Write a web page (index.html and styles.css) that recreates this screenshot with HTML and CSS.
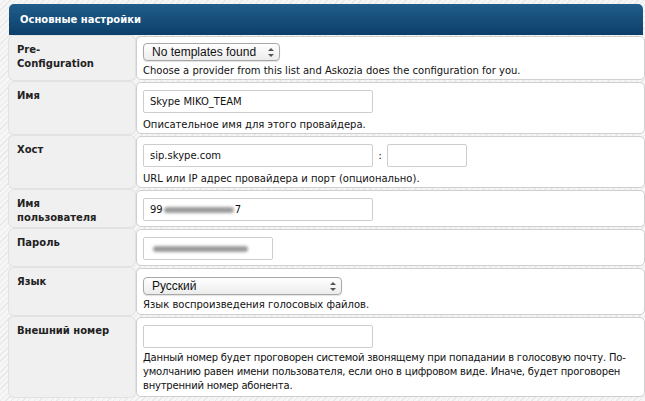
FILE: index.html
```html
<!DOCTYPE html>
<html lang="ru">
<head>
<meta charset="utf-8">
<link rel="stylesheet" href="styles.css">
</head>
<body>
<div class="page">
  <div class="panel-head">Основные настройки</div>
  <div class="form">
    <div class="label">Pre-<br>Configuration</div>
    <div class="value">
      <div class="select sel-tpl"><span>No templates found</span><span class="arrows"></span></div>
      <div class="desc">Choose a provider from this list and Askozia does the configuration for you.</div>
    </div>

    <div class="label">Имя</div>
    <div class="value">
      <div class="input w-wide">Skype MIKO_TEAM</div>
      <div class="desc after-input">Описательное имя для этого провайдера.</div>
    </div>

    <div class="label">Хост</div>
    <div class="value">
      <div class="host-row">
        <div class="input w-wide">sip.skype.com</div>
        <span class="colon">:</span>
        <div class="input w-port"></div>
      </div>
      <div class="desc after-input">URL или IP адрес провайдера и порт (опционально).</div>
    </div>

    <div class="label">Имя<br>пользователя</div>
    <div class="value val-tight">
      <div class="input w-wide"><span>99</span><span class="blur b1"></span><span>7</span></div>
    </div>

    <div class="label">Пароль</div>
    <div class="value val-tight">
      <div class="input w-pass"><span class="blur b2"></span></div>
    </div>

    <div class="label">Язык</div>
    <div class="value val-lang">
      <div class="select sel-lang"><span>Русский</span><span class="arrows"></span></div>
      <div class="desc">Язык воспроизведения голосовых файлов.</div>
    </div>

    <div class="label">Внешний номер</div>
    <div class="value val-last">
      <div class="input w-wide"></div>
      <div class="desc desc-long">Данный номер будет проговорен системой звонящему при попадании в голосовую почту. По-умолчанию равен имени пользователя, если оно в цифровом виде. Иначе, будет проговорен внутренний номер абонента.</div>
    </div>
  </div>
</div>
</body>
</html>
```

FILE: styles.css
```css
html, body {
  margin: 0;
  padding: 0;
}
body {
  background-color: #f3f3f3;
  background-image: repeating-linear-gradient(135deg, #f6f6f6 0 3px, #e8e8e8 3px 4px);
  font-family: "DejaVu Sans", Verdana, sans-serif;
  color: #111;
  width: 645px;
  height: 401px;
  overflow: hidden;
}
.page {
  padding: 4px 2px 0 9px;
}
.panel-head {
  height: 31px;
  box-sizing: border-box;
  padding: 10px 0 0 11px;
  background: linear-gradient(#215d8b, #0c3f6a);
  border-radius: 5px 5px 0 0;
  color: #fff;
  font-weight: bold;
  font-size: 10px;
  line-height: 12px;
}
.form {
  display: grid;
  grid-template-columns: 126px 1fr;
  column-gap: 1px;
  row-gap: 2px;
  margin-top: 1px;
}
.label {
  background: #f0f0f0;
  border-radius: 5px;
  box-shadow: 0 0 0 1px #e2e2e2;
  padding: 7px 8px 2px;
  font-weight: bold;
  font-size: 10px;
  line-height: 14px;
  color: #222;
}
.value {
  background: #fff;
  border: 1px solid #cfcfcf;
  border-radius: 5px;
  padding: 6px 6px 1px;
  font-family: "DejaVu Sans", sans-serif;
  font-size: 10px;
}
.val-tight { padding-bottom: 5px; }
.val-lang { padding-bottom: 2px; }
.val-last { padding-bottom: 3px; }
.desc {
  margin-top: 3px;
  line-height: 14px;
  color: #111;
}
.after-input { margin-top: 5px; }
.desc-long {
  width: 495px;
  letter-spacing: -0.2px;
}
.input {
  box-sizing: border-box;
  height: 23px;
  margin-top: 1px;
  border: 1px solid #cdcdcd;
  border-radius: 2px;
  background: #fff;
  padding: 0 6px;
  line-height: 21px;
  font-size: 10px;
  display: flex;
  align-items: center;
}
.w-wide { width: 230px; }
.w-port { width: 80px; }
.w-pass { width: 130px; }
.host-row {
  display: flex;
  align-items: center;
}
.colon {
  width: 14px;
  text-align: center;
  font-size: 11px;
}
.select {
  box-sizing: border-box;
  height: 18px;
  border: 1px solid #a8a8a8;
  border-radius: 4px;
  background: linear-gradient(#ffffff, #ececec);
  display: flex;
  align-items: center;
  justify-content: space-between;
  padding: 0 5px 0 8px;
  font-family: "Liberation Sans", Arial, sans-serif;
  font-size: 12px;
  box-shadow: 0 1px 1px rgba(0,0,0,0.12);
}
.sel-tpl { width: 137px; }
.sel-lang { width: 199px; margin-top: 2px; }
.arrows {
  width: 6px;
  height: 9px;
  position: relative;
}
.arrows::before, .arrows::after {
  content: "";
  position: absolute;
  left: 0;
  border-left: 3px solid transparent;
  border-right: 3px solid transparent;
}
.arrows::before { top: 0; border-bottom: 3px solid #555; }
.arrows::after { bottom: 0; border-top: 3px solid #555; }
.blur {
  display: inline-block;
  height: 6px;
  border-radius: 3px;
  background: #9b9b9b;
  filter: blur(1.5px);
}
.b1 { width: 70px; margin: 0 1px; }
.b2 { width: 95px; margin-left: 3px; }
```
